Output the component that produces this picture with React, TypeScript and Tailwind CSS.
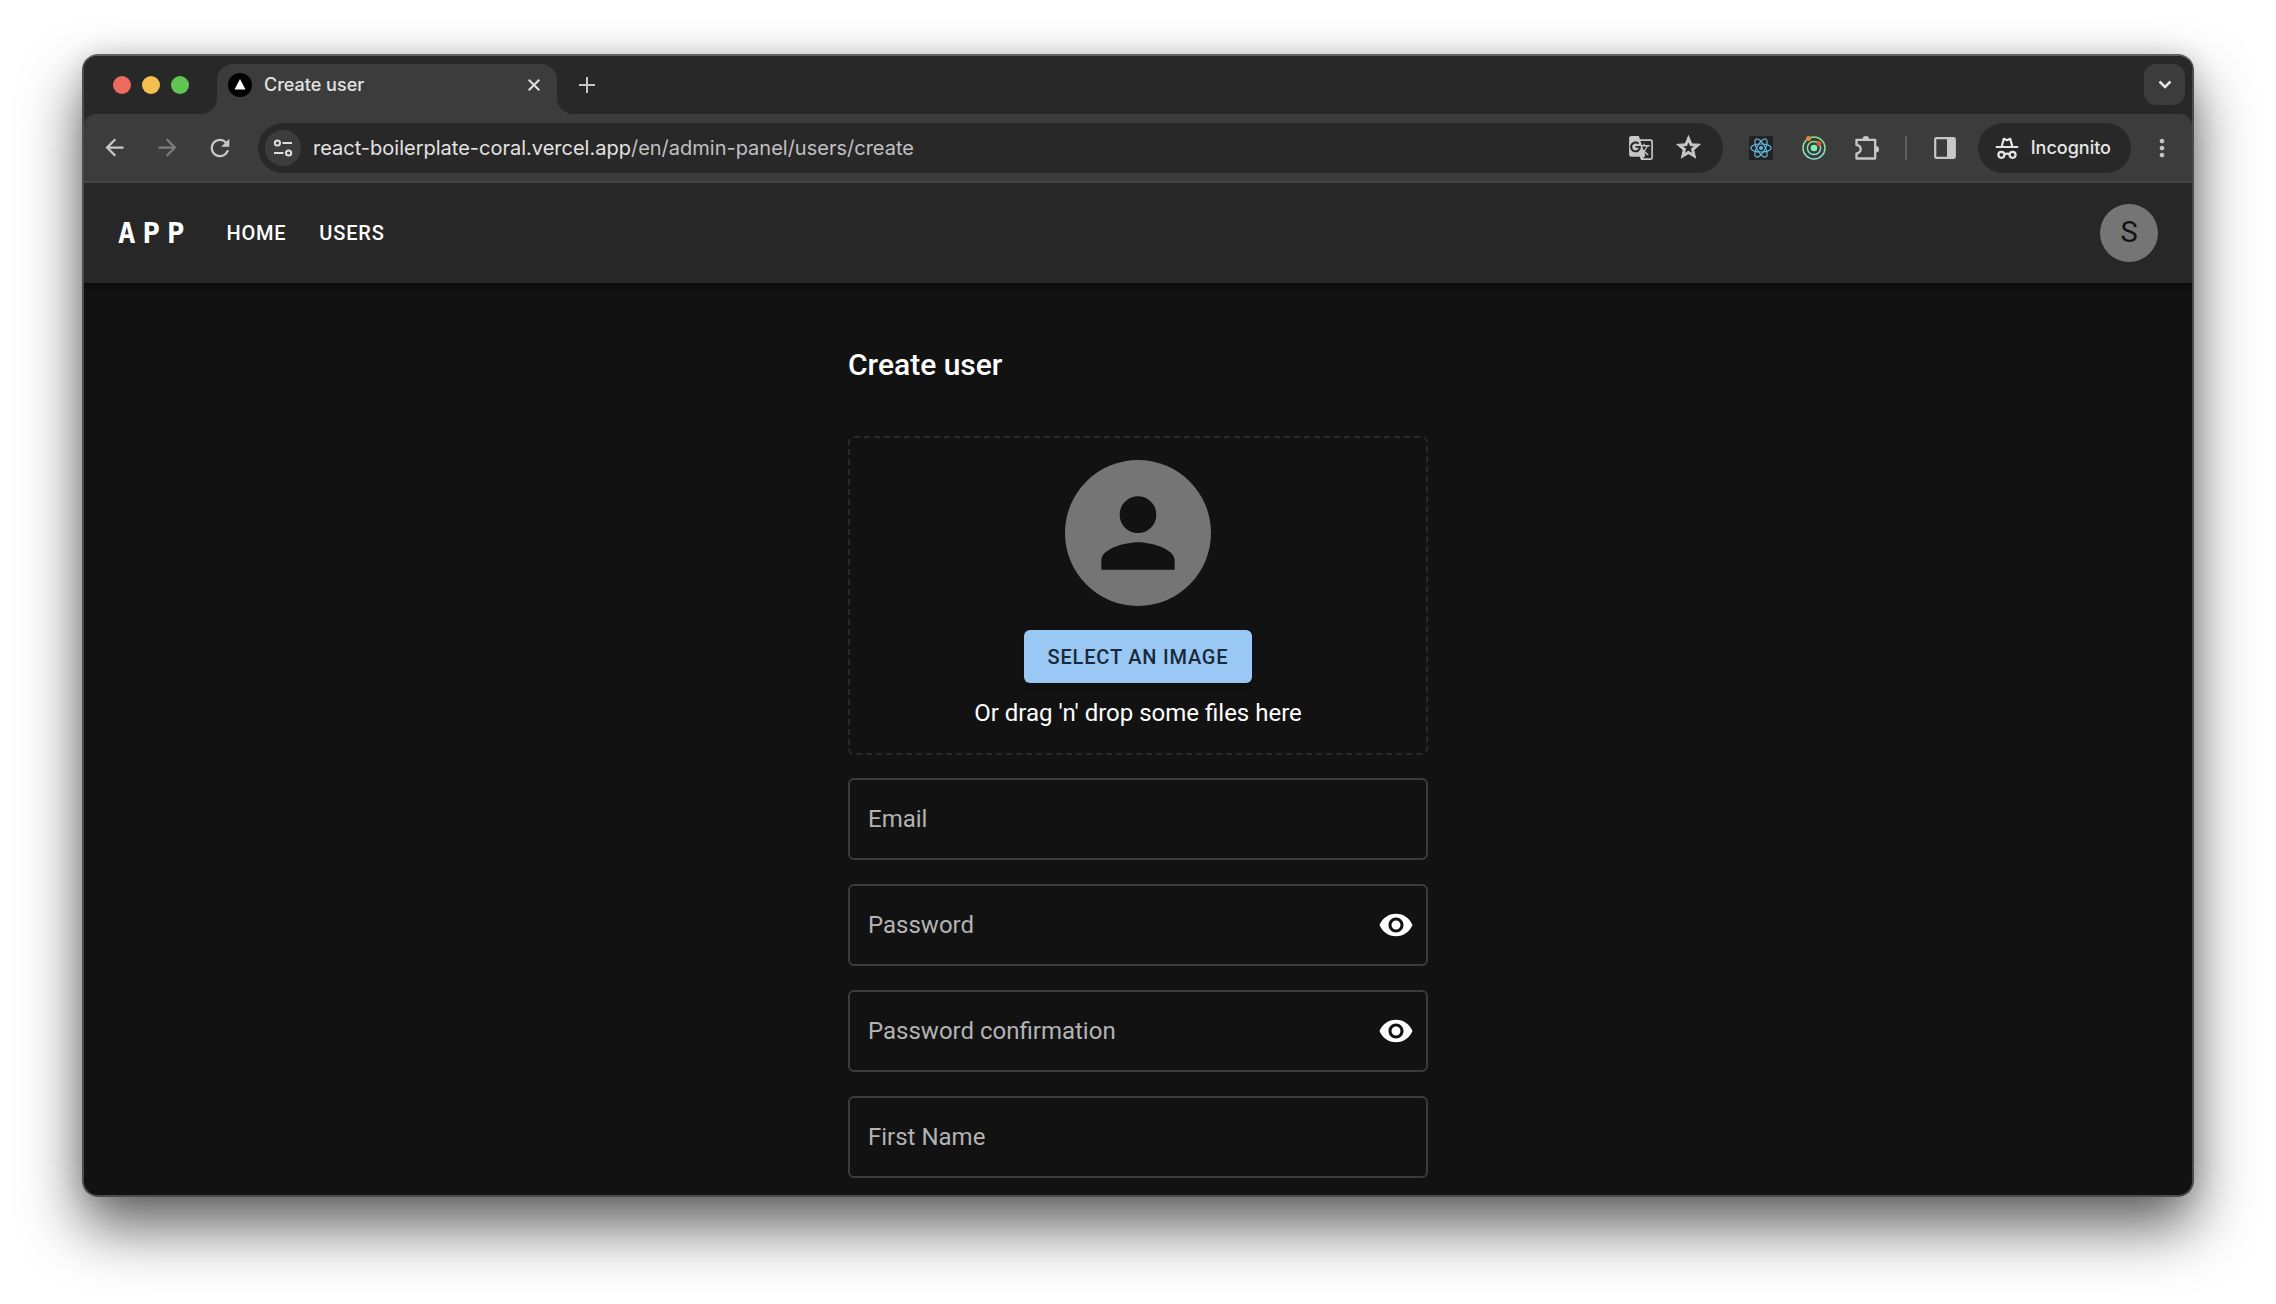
import { useState } from 'react';
import type { ReactNode } from 'react';
import {
  MdArrowBack,
  MdArrowForward,
  MdPerson,
  MdVisibility,
  MdGTranslate,
  MdStarOutline,
  MdRefresh,
  MdMoreVert,
} from 'react-icons/md';

function CloseIcon() {
  return (
    <svg viewBox="0 0 12 12" className="size-3" fill="none" stroke="currentColor" strokeWidth="2">
      <path d="M.7.7l10.6 10.6M11.3.7.7 11.3" />
    </svg>
  );
}

function PlusIcon() {
  return (
    <svg viewBox="0 0 16 16" className="size-4" fill="none" stroke="currentColor" strokeWidth="2">
      <path d="M8 0v16M0 8h16" />
    </svg>
  );
}

function ChevronIcon() {
  return (
    <svg viewBox="0 0 14 10" className="h-[10px] w-[14px]" fill="none" stroke="currentColor" strokeWidth="2.5">
      <path d="M1.5 1.5 7 7l5.5-5.5" />
    </svg>
  );
}

function TuneIcon() {
  return (
    <svg viewBox="0 0 20 20" className="size-5" fill="none" stroke="#dedede" strokeWidth="2">
      <circle cx="4.4" cy="5" r="2.6" />
      <path d="M9.5 5H19M1 15h9.5" />
      <circle cx="15.6" cy="15" r="2.6" />
    </svg>
  );
}

function ReactIcon() {
  return (
    <svg viewBox="0 0 24 24" className="size-6">
      <rect width="24" height="24" rx="1.5" fill="#222222" />
      <g fill="none" stroke="#61b9e0" strokeWidth="1.2">
        <ellipse cx="12" cy="12" rx="10.2" ry="4" />
        <ellipse cx="12" cy="12" rx="10.2" ry="4" transform="rotate(60 12 12)" />
        <ellipse cx="12" cy="12" rx="10.2" ry="4" transform="rotate(120 12 12)" />
      </g>
      <circle cx="12" cy="12" r="2" fill="#61b9e0" />
    </svg>
  );
}

function OrbitIcon() {
  return (
    <svg viewBox="0 0 24 24" className="size-6">
      <defs>
        <linearGradient id="orbit" x1="0" y1="0" x2="0" y2="1">
          <stop offset="0" stopColor="#84e084" />
          <stop offset="1" stopColor="#7fe6d3" />
        </linearGradient>
      </defs>
      <g fill="none" stroke="url(#orbit)" strokeWidth="1.5">
        <circle cx="12" cy="12" r="11" />
        <circle cx="12" cy="12" r="6.6" />
      </g>
      <circle cx="12" cy="12" r="3.3" fill="#7ff0b4" />
      <circle cx="6.6" cy="2.6" r="2.5" fill="#e8833a" />
      <circle cx="17" cy="7.5" r="2.4" fill="#e2553a" />
    </svg>
  );
}

function PuzzleIcon() {
  return (
    <svg viewBox="0 0 24 24" className="size-7" fill="#c7c7c7">
      <path
        d="M3 5h16v16H3v-4.4a3.6 3.6 0 0 0 0-7.2z"
        fill="none"
        stroke="#c7c7c7"
        strokeWidth="2"
        strokeLinejoin="round"
      />
      <path d="M8.2 4.5a2.8 2.8 0 0 1 5.6 0zM19.5 10.2a2.8 2.8 0 0 1 0 5.6z" />
    </svg>
  );
}

function PanelIcon() {
  return (
    <svg viewBox="0 0 24 24" className="size-6">
      <rect x="2.2" y="2.2" width="19.6" height="19.6" rx="1" fill="none" stroke="#c7c7c7" strokeWidth="2.2" />
      <path d="M14 2h8v20h-8z" fill="#c7c7c7" />
    </svg>
  );
}

function IncognitoIcon() {
  return (
    <svg viewBox="0 0 24 24" className="size-6" fill="none" stroke="#e6e6e6" strokeWidth="2.2">
      <path d="M6.8 10 8.8 2.8 12 4.200l3.200-1.400 2 7.200" strokeLinejoin="round" />
      <path d="M.8 11h22.4" />
      <circle cx="6.4" cy="18.8" r="3" />
      <circle cx="17.6" cy="18.8" r="3" />
      <path d="M9.4 18.4q2.6-1.4 5.2 0" />
    </svg>
  );
}

function TabFoot({ side }: { side: 'left' | 'right' }) {
  return (
    <svg viewBox="0 0 16 16" className="size-4 self-end" fill="#3c3c3c">
      <path d={side === 'left' ? 'M16 0v16H0A16 16 0 0 0 16 0z' : 'M0 0v16h16A16 16 0 0 1 0 0z'} />
    </svg>
  );
}

function IconButton({ label, className = '', children }: { label: string; className?: string; children?: ReactNode }) {
  return (
    <button type="button" aria-label={label} className={`flex shrink-0 items-center justify-center ${className}`}>
      {children}
    </button>
  );
}

function TabStrip() {
  return (
    <div className="flex h-[58px] bg-[#282828]">
      <div className="flex w-[117px] items-center gap-[11px] pl-[29px]">
        <IconButton label="Close window" className="size-[18px] rounded-full bg-[#ed6a5e]" />
        <IconButton label="Minimize window" className="size-[18px] rounded-full bg-[#f5bf4f]" />
        <IconButton label="Zoom window" className="size-[18px] rounded-full bg-[#61c554]" />
      </div>
      <TabFoot side="left" />
      <div className="mt-2 flex w-[340px] items-center rounded-t-2xl bg-[#3c3c3c] px-[11px] pb-2">
        <svg viewBox="0 0 24 24" className="size-6">
          <circle cx="12" cy="12" r="12" fill="#000" />
          <path d="M12 6l5.5 10.5h-11z" fill="#fff" />
        </svg>
        <span className="ml-3 flex-1 text-lg font-medium leading-6 text-[#e3e3e3]">Create user</span>
        <IconButton label="Close tab" className="size-6 text-[#e0e0e0]">
          <CloseIcon />
        </IconButton>
      </div>
      <TabFoot side="right" />
      <IconButton label="New tab" className="w-[28px] text-[#c7c7c7]">
        <PlusIcon />
      </IconButton>
      <IconButton label="Search tabs" className="ml-auto mr-[7px] mt-2 size-[41px] rounded-xl bg-[#3c3c3c] text-[#e3e3e3]">
        <ChevronIcon />
      </IconButton>
    </div>
  );
}

function Toolbar() {
  return (
    <div className="bg-[#282828]">
      <div className="flex h-[69px] items-center rounded-t-xl border-b-2 border-[#484848] bg-[#3c3c3c] px-4">
        <div className="flex gap-[25px] text-[#c7c7c7]">
          <IconButton label="Back" className="size-7"><MdArrowBack className="size-[27px]" /></IconButton>
          <IconButton label="Forward" className="size-7 text-[#7d7d7d]"><MdArrowForward className="size-[27px]" /></IconButton>
          <IconButton label="Reload" className="size-7"><MdRefresh className="size-[28px]" /></IconButton>
        </div>
        <div className="ml-6 flex h-[50px] flex-1 items-center rounded-full bg-[#282828] pl-[7px] pr-5">
          <IconButton label="Site information" className="size-9 rounded-full bg-[#3c3c3c]"><TuneIcon /></IconButton>
          <div className="ml-3 flex-1 text-xl leading-6 text-[#c0c0c0]">
            <span className="text-[#e3e3e3]">react-boilerplate-coral.vercel.app</span>/en/admin-panel/users/create
          </div>
          <IconButton label="Translate" className="size-7 text-[#c7c7c7]"><MdGTranslate className="size-[26px]" /></IconButton>
          <IconButton label="Bookmark" className="ml-5 size-7 text-[#c7c7c7]">
            <MdStarOutline className="size-[27px] stroke-1" />
          </IconButton>
        </div>
        <div className="ml-6 flex items-center gap-[25px]">
          <IconButton label="React developer tools" className="size-7"><ReactIcon /></IconButton>
          <IconButton label="Orbit extension" className="size-7"><OrbitIcon /></IconButton>
          <IconButton label="Extensions" className="size-7"><PuzzleIcon /></IconButton>
        </div>
        <div className="ml-6 h-6 w-[2px] bg-[#5f5f5f]" />
        <IconButton label="Side panel" className="ml-6 size-7"><PanelIcon /></IconButton>
        <button
          type="button"
          className="ml-[19px] flex h-[50px] items-center rounded-full bg-[#282828] pl-[17px] pr-5 text-lg font-medium leading-6 text-[#e6e6e6]"
        >
          <IncognitoIcon />
          <span className="ml-3">Incognito</span>
        </button>
        <IconButton label="Menu" className="ml-[17px] size-7 text-[#c7c7c7]"><MdMoreVert className="size-8" /></IconButton>
      </div>
    </div>
  );
}

function AppBar() {
  return (
    <header className="relative flex h-[100px] items-center bg-[#272727] px-[34px] text-white shadow-[0_3px_6px_rgba(0,0,0,0.5)]">
      <a href="#app" className="font-['DejaVu_Sans_Mono'] text-[29px] font-bold leading-10 tracking-[7px]">APP</a>
      <nav className="ml-[35px] flex gap-[33px] font-[Roboto] text-xl font-medium leading-8 tracking-[0.04em]">
        <a href="#home">HOME</a>
        <a href="#users">USERS</a>
      </nav>
      <button
        type="button"
        aria-label="Account"
        className="ml-auto flex size-[58px] items-center justify-center rounded-full bg-[#757575] font-[Roboto] text-[29px] text-[#121212]"
      >
        S
      </button>
    </header>
  );
}

function Field({ id, label, type }: { id: string; label: string; type: 'email' | 'password' | 'text' }) {
  const [shown, setShown] = useState(false);
  const secret = type === 'password';
  return (
    <div className="flex h-[82px] items-center rounded-md border-2 border-[#3b3b3b] pl-[18px] pr-3">
      <div className="grid flex-1 items-center text-2xl">
        <input
          id={id}
          type={secret && shown ? 'text' : type}
          placeholder=" "
          className="peer col-start-1 row-start-1 min-w-0 bg-transparent text-white outline-none"
        />
        <label
          htmlFor={id}
          className="col-start-1 row-start-1 cursor-text text-[#b3b3b3] peer-focus:invisible peer-[:not(:placeholder-shown)]:invisible"
        >
          {label}
        </label>
      </div>
      {secret && (
        <button type="button" aria-label="Toggle visibility" onClick={() => setShown(!shown)} className="text-white">
          <MdVisibility className="size-9" />
        </button>
      )}
    </div>
  );
}

function CreateUser() {
  return (
    <main className="flex-1 px-8 pb-[17px] pt-[59px] font-[Roboto] text-white">
      <form className="mx-auto flex max-w-[580px] flex-col">
        <h1 className="text-3xl font-medium leading-[46px]">Create user</h1>
        <div className="mt-12 flex flex-col items-center rounded-md border-2 border-dashed border-[#292929] pb-[22px] pt-[22px]">
          <div className="flex size-[146px] items-center justify-center rounded-full bg-[#757575] text-[#121212]">
            <MdPerson className="size-[110px]" />
          </div>
          <button
            type="button"
            className="mt-6 h-[53px] rounded-md bg-[#9ac8f5] px-6 text-xl font-medium tracking-[0.04em] text-[#1b2a38] shadow-md"
          >
            SELECT AN IMAGE
          </button>
          <p className="mt-3 text-2xl leading-9">Or drag 'n' drop some files here</p>
        </div>
        <div className="mt-[23px] flex flex-col gap-6">
          <Field id="email" label="Email" type="email" />
          <Field id="password" label="Password" type="password" />
          <Field id="confirmation" label="Password confirmation" type="password" />
          <Field id="first-name" label="First Name" type="text" />
        </div>
      </form>
    </main>
  );
}

export default function App() {
  return (
    <div className="flex min-h-screen flex-col bg-white px-[82px] pb-[107px] pt-[54px] font-[Inter]">
      <div className="flex flex-1 flex-col rounded-2xl shadow-[0_30px_60px_rgba(0,0,0,0.62),0_0_24px_rgba(0,0,0,0.12)]">
        <div className="flex flex-1 flex-col overflow-hidden rounded-2xl border-2 border-[#4c4c4c] border-t-[#606060] bg-[#121212]">
          <TabStrip />
          <Toolbar />
          <AppBar />
          <CreateUser />
        </div>
      </div>
    </div>
  );
}
